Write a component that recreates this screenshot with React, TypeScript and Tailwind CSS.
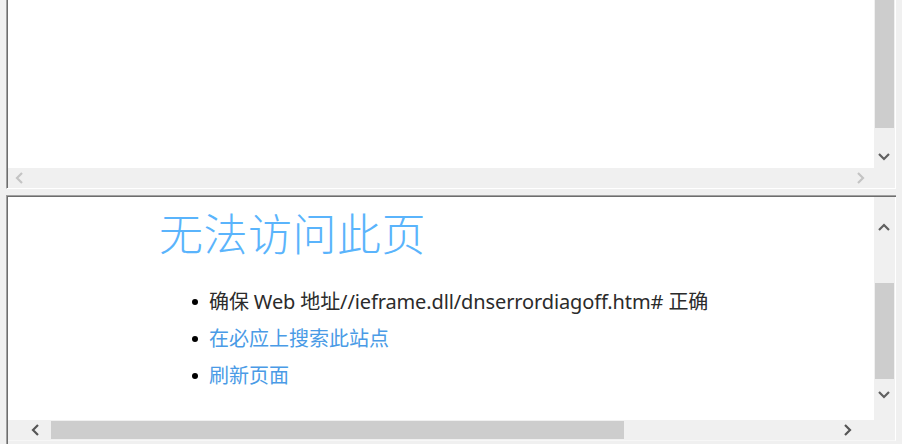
import React from "react";

type Dir = "up" | "down" | "left" | "right";

const chevronPaths: Record<Dir, string> = {
  up: "M1 7 L6 2 L11 7",
  down: "M1 2 L6 7 L11 2",
  left: "M7 1 L2 6 L7 11",
  right: "M2 1 L7 6 L2 11",
};

function Arrow({ dir, color }: { dir: Dir; color: string }) {
  const vertical = dir === "up" || dir === "down";
  return (
    <svg
      width={vertical ? 12 : 9}
      height={vertical ? 9 : 12}
      viewBox={vertical ? "0 0 12 9" : "0 0 9 12"}
      fill="none"
    >
      <path d={chevronPaths[dir]} stroke={color} strokeWidth="2.2" />
    </svg>
  );
}

function TopPane() {
  return (
    <section className="flex flex-col border-l border-[#a0a0a0] border-b border-b-white">
      <div className="flex flex-col border-l border-[#6d6d6d]">
        <div className="flex h-[168px]">
          <div className="flex-1 bg-white" />
          <div className="w-[22px] flex flex-col bg-[#f0f0f0] border-r border-white">
            <div className="h-[128px] w-[19px] ml-[1px] bg-[#cdcdcd]" />
            <div className="flex-1 flex items-end justify-center pr-[2px] pb-[7px]">
              <Arrow dir="down" color="#606060" />
            </div>
          </div>
        </div>
        <div className="flex h-[20px] bg-[#f0f0f0] items-center border-r border-white">
          <div className="w-[22px] flex justify-center">
            <Arrow dir="left" color="#c4c4c4" />
          </div>
          <div className="flex-1" />
          <div className="w-[22px] flex justify-center mr-[24px]">
            <Arrow dir="right" color="#c4c4c4" />
          </div>
        </div>
      </div>
    </section>
  );
}

function Item({ children, color }: { children: React.ReactNode; color: string }) {
  return (
    <li className="flex items-center">
      <span className="w-[17px] flex items-center">
        <span className="w-[6px] h-[6px] rounded-full bg-black" />
      </span>
      <span className={color}>{children}</span>
    </li>
  );
}

function BottomPane() {
  return (
    <section className="flex-1 flex flex-col border-l border-t border-[#a0a0a0]">
      <div className="flex-1 flex flex-col border-l border-t border-[#6d6d6d]">
        <div className="flex h-[223px]">
          <div className="flex-1 bg-white pl-[151px] pt-[11px]">
            <h1 className="text-[44px] leading-[52px] font-light text-[#5ab4fc] tracking-[0.5px]">
              无法访问此页
            </h1>
            <ul className="mt-[23px] pl-[33px] text-[20px] leading-[37px]">
              <Item color="text-[#2b2b2b] tracking-[-0.12px]">
                确保 Web 地址//ieframe.dll/dnserrordiagoff.htm# 正确
              </Item>
              <Item color="text-[#4a9be6]">在必应上搜索此站点</Item>
              <Item color="text-[#4a9be6]">刷新页面</Item>
            </ul>
          </div>
          <div className="w-[22px] flex flex-col bg-[#f0f0f0] border-r border-white">
            <div className="h-[56px] flex items-center justify-center pr-[2px] pt-[4px]">
              <Arrow dir="up" color="#606060" />
            </div>
            <div className="h-[30px]" />
            <div className="h-[96px] w-[19px] ml-[1px] bg-[#cdcdcd]" />
            <div className="flex-1 flex items-start justify-center pr-[2px] pt-[11px]">
              <Arrow dir="down" color="#606060" />
            </div>
          </div>
        </div>
        <div className="flex h-[21px] bg-[#f0f0f0] items-center border-r border-white border-b border-b-[#f7f7f7]">
          <div className="w-[43px] flex justify-center pl-[11px]">
            <Arrow dir="left" color="#555555" />
          </div>
          <div className="w-[573px] h-[18px] bg-[#cdcdcd]" />
          <div className="flex-1" />
          <div className="w-[22px] flex justify-center mr-[37px]">
            <Arrow dir="right" color="#555555" />
          </div>
        </div>
      </div>
    </section>
  );
}

export default function App() {
  return (
    <div
      className="w-[902px] h-[444px] bg-[#f0f0f0] flex flex-col gap-[6px] pl-[6px] pr-[6px] overflow-hidden"
      style={{ fontFamily: '"Noto Sans", "Noto Sans CJK SC", sans-serif' }}
    >
      <TopPane />
      <BottomPane />
    </div>
  );
}
